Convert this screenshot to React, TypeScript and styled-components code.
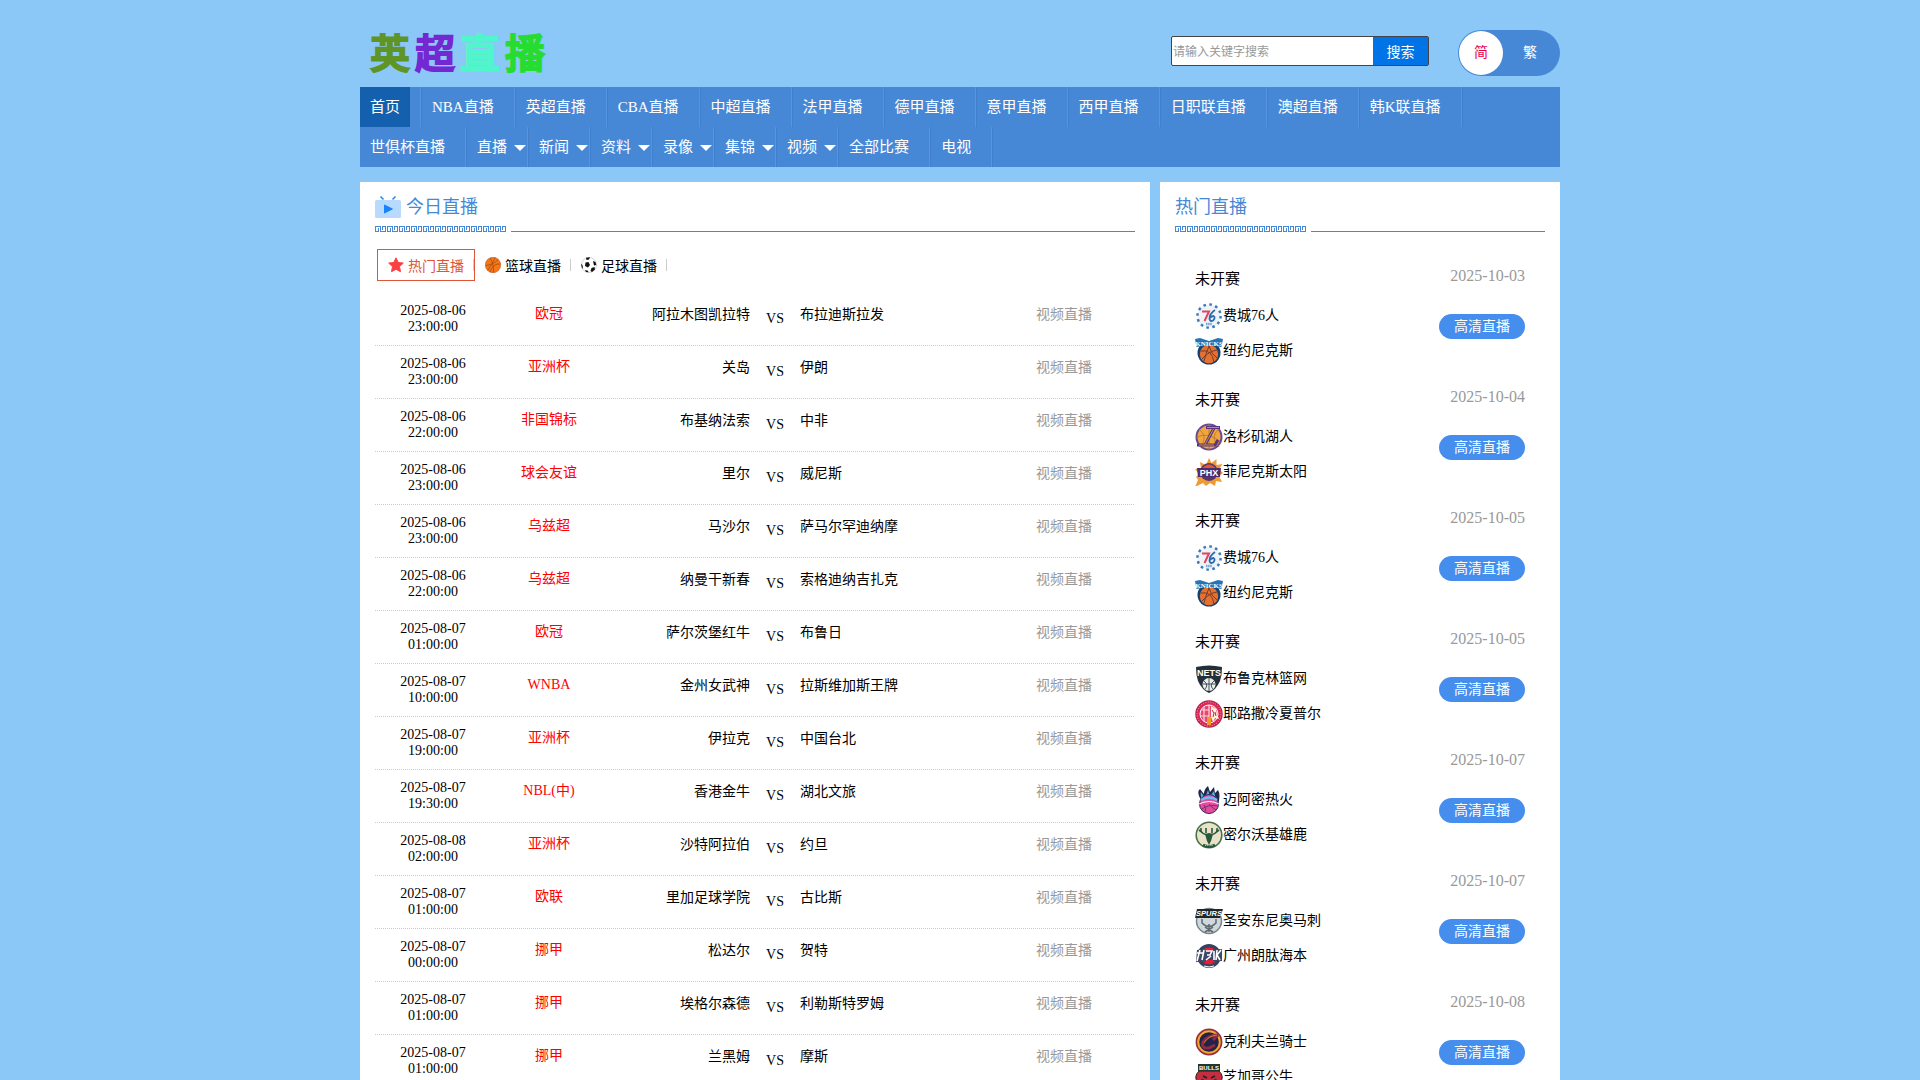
import React from "react";
import styled, { createGlobalStyle, css } from "styled-components";

const blue = "#4788d6";

const GlobalStyle = createGlobalStyle`
  * { box-sizing: border-box; }
  html, body { margin: 0; padding: 0; }
  body {
    background: #8bc8f8;
    color: #000;
    font: 14px/16px "Liberation Serif", "Noto Sans CJK SC", serif;
    overflow: hidden;
  }
  a { color: inherit; text-decoration: none; }
  ul { list-style: none; margin: 0; padding: 0; }
  h1, h2, p { margin: 0; font-weight: 400; }
  button, input { font-family: inherit; border: 0; padding: 0; margin: 0; }
  button { cursor: pointer; }
`;

const Page = styled.div`
  height: 100vh;
  overflow: hidden;
`;

const Container = styled.div`
  max-width: 1200px;
  margin: 0 auto;
`;

const Header = styled.header`
  display: flex;
  align-items: flex-start;
  padding: 30px 0 11px;
`;

const Logo = styled.h1`
  flex: 1;
  padding-left: 10px;
  font-size: 40px;
  line-height: 42px;
  font-weight: 500;
  font-family: "Noto Sans CJK SC", sans-serif;

  a { display: flex; gap: 5px; }
`;

const LogoChar = styled.span<{ $color: string }>`
  color: ${(p) => p.$color};
  -webkit-text-stroke: 2px ${(p) => p.$color};
  stroke-linejoin: round;
`;

const SearchForm = styled.form`
  display: flex;
  width: 258px;
  height: 30px;
  margin: 6px 29px 0 0;
  border: 1px solid #444;
  border-radius: 2px;
  background: #fff;
`;

const SearchInput = styled.input`
  flex: 1;
  min-width: 0;
  padding: 3px 0 0 1px;
  font-size: 12px;
  background: transparent;
  outline: none;
  &::placeholder { color: #999; }
`;

const SearchButton = styled.button`
  width: 55px;
  font-size: 14px;
  color: #fff;
  background: #0073e6;
`;

const LangSwitch = styled.div`
  display: flex;
  padding: 1px;
  width: 102px;
  height: 46px;
  border-radius: 23px;
  background: ${blue};
`;

const LangButton = styled.button<{ $active?: boolean }>`
  width: 44px;
  height: 44px;
  padding-bottom: 4px;
  border-radius: 50%;
  font-size: 14px;
  color: ${(p) => (p.$active ? "#e6004c" : "#fff")};
  background: ${(p) => (p.$active ? "#fff" : "transparent")};
  & + & { margin-left: 5px; }
`;

const Nav = styled.nav`
  background: ${blue};
  ul { display: flex; flex-wrap: wrap; }
`;

const NavItem = styled.li`
  display: flex;
  height: 40px;
  padding-right: 10px;
  border-right: 1px solid #5595e4;
  margin-right: 1px;
  box-shadow: 1px 0 #3f7fcc;
`;

const NavLink = styled.a<{ $active?: boolean; $caret?: boolean }>`
  display: flex;
  align-items: center;
  position: relative;
  padding: 0 10px;
  font-size: 15px;
  color: #fff;
  ${(p) => p.$active && css`background: #1560ae;`}
  ${(p) =>
    p.$caret &&
    css`
      &::after {
        content: "";
        position: absolute;
        right: -9px;
        top: 18px;
        border: 6px solid transparent;
        border-top-color: #fff;
        border-bottom: 0;
      }
    `}
`;

const Columns = styled.div`
  display: flex;
  align-items: flex-start;
  gap: 10px;
  margin-top: 15px;
`;

const Panel = styled.section<{ $side?: boolean }>`
  ${(p) => (p.$side ? "width: 400px;" : "flex: 1;")}
  padding: 0 15px 20px;
  background: #fff;
`;

const PanelTitle = styled.h2`
  display: flex;
  align-items: center;
  gap: 5px;
  height: 44px;
  padding-top: 5px;
  font-size: 18px;
  line-height: 24px;
  color: ${blue};
`;

const Rule = styled.div`
  display: flex;
  gap: 5px;
  height: 6px;

  svg { flex: none; display: block; }
  &::after {
    content: "";
    flex: 1;
    border-bottom: 1px solid ${blue};
  }
`;

const Tabs = styled.div`
  display: flex;
  padding: 17px 2px 12px;
`;

const Tab = styled.button<{ $active?: boolean }>`
  display: flex;
  align-items: center;
  gap: 4px;
  height: 32px;
  padding: 0 10px;
  position: relative;
  font-size: 14px;
  color: ${(p) => (p.$active ? "#df5538" : "#000")};
  background: none;
  ${(p) => p.$active && css`border: 1px solid #df5538;`}

  &::after {
    content: "";
    position: absolute;
    right: 0;
    top: ${(p) => (p.$active ? 9 : 10)}px;
    width: 1px;
    height: 12px;
    background: #ccc;
  }
`;

const Schedule = styled.table`
  width: 100%;
  table-layout: fixed;
  border-spacing: 0;
  tr {
    background: repeating-linear-gradient(90deg, #ccc 0 1px, transparent 1px 2px)
      bottom / 100% 1px no-repeat;
  }
`;

const Cell = styled.td<{ $top: number; $align?: string; $color?: string }>`
  height: 53px;
  padding: ${(p) => p.$top}px 0 0;
  vertical-align: top;
  text-align: ${(p) => p.$align || "center"};
  color: ${(p) => p.$color || "#000"};
  time { display: block; width: 80px; margin: 0 auto; }
`;

const HotList = styled.ul`
  padding: 32px 20px 0;
`;

const HotMatch = styled.li`
  display: flex;
  justify-content: space-between;
  height: 121px;
`;

const Status = styled.p`
  height: 36px;
  font-size: 15px;
  line-height: 30px;
`;

const Team = styled.div`
  display: flex;
  align-items: flex-start;
  height: 35px;
  padding-top: 2px;
  svg { flex: none; }
  span { line-height: 28px; }
`;

const HotSide = styled.div`
  display: flex;
  flex-direction: column;
  align-items: flex-end;
  padding-top: 2px;
  time { font-size: 16px; line-height: 20px; color: #999; }
`;

const HdButton = styled.a`
  width: 86px;
  margin-top: 28px;
  border-radius: 13px;
  line-height: 25px;
  text-align: center;
  color: #fff;
  background: #458eee;
`;

const TvIcon = () => (
  <svg width="26" height="22" viewBox="0 0 26 22" aria-hidden="true">
    <path d="M5.5.5 8.500 3.500M20.500.5 17.500 3.500" stroke="#1e88f7" strokeWidth="1.5" />
    <rect y="4" width="26" height="18" rx="1.5" fill="#b9daff" />
    <path d="M9 9.300q0-1 1-.6l7.500 3.700q.8.600 0 1.200L10 17.300q-1 .4-1-.6z" fill="#1684fb" />
  </svg>
);

const Meander = () => (
  <svg width="131" height="6" viewBox="0 0 131 6" fill="none" stroke={blue} shapeRendering="crispEdges" aria-hidden="true">
    {Array.from({ length: 11 }, (_, i) => (
      <path
        key={i}
        transform={`translate(${i * 12} 0)`}
        d="M3.5 2V5.5H.5V.5H5.5V5.5H10.500V.5H7.500V4"
      />
    ))}
  </svg>
);

const StarIcon = () => (
  <svg width="16" height="16" viewBox="0 0 16 16" aria-hidden="true">
    <path
      d="M8 .8l2.200 4.700 5.100.6-3.800 3.500 1 5.100L8 12.300l-4.500 2.400 1-5.100L.7 6.100l5.100-.6z"
      fill="#fd3f41" stroke="#fd3f41" strokeLinejoin="round"
    />
  </svg>
);

const BasketballIcon = () => (
  <svg width="16" height="16" viewBox="0 0 16 16" fill="none" aria-hidden="true">
    <circle cx="8" cy="8" r="7.700" fill="#f87518" stroke="#b4601f" strokeWidth=".6" />
    <path d="M.5 8.500Q8 8 13.200 2.500M5 1Q9 7 8.500 15.500M10 .6Q7 8 2.600 13.200M15.500 7Q8 6 5 15" stroke="#a1500f" strokeWidth=".8" />
  </svg>
);

const FootballIcon = () => (
  <svg width="16" height="16" viewBox="0 0 16 16" aria-hidden="true">
    <circle cx="8" cy="8" r="7.600" fill="#fff" stroke="#bbb" strokeWidth=".6" />
    <path d="M5 .8 9 .3 8 2.500 5.500 3zM4.500 5.500 7.500 5l1.500 3-2 2.500L4 9zM12 4l2.500 1 .8 3-2.300.5zM10.500 11l3-1 .5 2.500-3 2.500-1.500-1zM0 7l1.500 1 .5 4L.8 10.500zM4 13l3 .8.5 1.500L5 15z" fill="#111" />
  </svg>
);

const crests: Record<string, React.ReactNode> = {
  sixers: (
    <>
      <circle cx="14" cy="14" r="11.5" fill="#eef3fa" />
      <circle cx="14" cy="14" r="11.6" fill="none" stroke="#3877b8" strokeWidth="2.4" strokeDasharray="2.6 3.47" />
      <path d="M7 9.500H14L9.500 19" fill="none" stroke="#e2435c" strokeWidth="2" />
      <path d="M20 8Q14 12 14.500 17q.7 3 3.500 1.500 3-3 .5-4.500-2 0-3.500 2" fill="none" stroke="#2a6cb0" strokeWidth="1.8" />
      <path d="M11 22H17" stroke="#79a3cd" strokeWidth="2.4" strokeDasharray="1.5 .6" />
    </>
  ),
  knicks: (
    <>
      <circle cx="14" cy="16" r="11.5" fill="#17406f" />
      <circle cx="14" cy="17" r="9.2" fill="#e5702f" />
      <path d="M14 9Q16 17 22 21M6 14Q17 12 19 25M14 9Q11 16 9 24M22 13Q14 14 7 22" fill="none" stroke="#733d2d" />
      <path d="M0 2 5 1 14 4 23 1 28 2 26.500 10Q14 7 1.500 10z" fill="#2774b5" />
      <text x="14" y="9" fontSize="7" fontWeight="900" fill="#fff" textAnchor="middle" fontFamily="Liberation Serif">KNICKS</text>
    </>
  ),
  lakers: (
    <>
      <circle cx="14" cy="14" r="12.5" fill="#f0a63d" stroke="#6a4795" strokeWidth="2" />
      <path d="M2 14Q12 9 25 18M14 1V27M4 6Q14 14 5 24M24 6Q14 14 24 24" fill="none" stroke="#b5752d" strokeWidth=".8" />
      <path d="M11 4.500H25M19 5 10 22M2 22H20L23 17" fill="none" stroke="#5a347d" strokeWidth="3" />
      <path d="M12 4.500H24M18.500 6 10 21.500M4 22H19" fill="none" stroke="#e6a546" strokeWidth=".8" />
    </>
  ),
  suns: (
    <>
      <path d="M14 0l2.500 5 5-4v6l6-1-3.500 5 4 4-4 3 3 6-6-1-1 5-5-3-4 3-3-3-8 4 3-7-2-3 3-3-4-5 6-1-1-6 6 3z" fill="#ef9a35" />
      <circle cx="14" cy="14" r="9" fill="#55356f" />
      <path d="M6 12Q14 1 22 12z" fill="#e15a2f" />
      <path d="M2 10H26L25 19H3z" fill="#4c2c6d" />
      <text x="14" y="18" fontSize="9" fontWeight="900" fill="#fff" textAnchor="middle" fontFamily="Liberation Sans">PHX</text>
    </>
  ),
  nets: (
    <>
      <path d="M1 2Q14-1 27 2 27 10 25 16 21 25 14 28 7 25 3 16 1 10 1 2z" fill="#243039" />
      <text x="14" y="11" fontSize="9" fontWeight="900" fill="#fff" textAnchor="middle" fontFamily="Liberation Sans">NETS</text>
      <circle cx="14" cy="19.5" r="6.5" fill="#e8eded" />
      <path d="M14 13V26M9 16Q14 20 10 24M19 16Q14 20 18 24M8 19H20" fill="none" stroke="#243039" strokeWidth=".8" />
    </>
  ),
  jerusalem: (
    <>
      <circle cx="14" cy="14" r="13" fill="#dc2859" stroke="#b9234c" strokeWidth="1.5" />
      <circle cx="14" cy="14" r="12" fill="none" stroke="#f5a3b6" strokeDasharray="1 1.5" />
      <circle cx="14" cy="14" r="9" fill="#e8476f" stroke="#fff" />
      <path d="M14 5v18M6 10h8M5 16h9M9 7v14" stroke="#ffd6de" strokeWidth="1.2" />
      <path d="M16 6l5 3 1 5 2 5-4-1-2 4-2-5z" fill="#fff2d5" />
      <path d="M17 10l2 3-1 4M20 12l1 4" stroke="#b9234c" fill="none" />
      <path d="M12 17h4v8h-4z" fill="#f29a22" />
    </>
  ),
  heat: (
    <>
      <path d="M6 14Q1 6 5 3L9 8Q9 3 13 0L15 6 19 1 20 7 23 4Q26 9 23 18z" fill="#21264a" />
      <path d="M7 14Q5 8 6 6l4 6 3-8 2 6 4-5 2 9z" fill="#58aeea" />
      <circle cx="14" cy="18" r="9.5" fill="#e34b9c" stroke="#332b58" />
      <path d="M6 14Q14 9 22 14" fill="none" stroke="#67bff2" strokeWidth="2.5" />
      <path d="M14 18Q16 21 21 24M9 19Q12 23 10 26M7 23Q14 18 22 20" fill="none" stroke="#7d2e75" />
      <path d="M4 18Q14 13 24 18" fill="none" stroke="#fff" />
    </>
  ),
  bucks: (
    <>
      <circle cx="14" cy="14" r="12.8" fill="#e8e2c8" stroke="#477148" strokeWidth="1.6" />
      <path d="M10 13 14 12 18 13 16 20 14 24 12 20z" fill="#28583c" />
      <path d="M13 14Q5 13 6 7M8 12L4 9M15 14Q23 13 22 7M20 12L24 9M11 12V7M17 12V7" fill="none" stroke="#28583c" strokeWidth="1.6" />
      <path d="M8 24Q14 27 20 24" stroke="#28583c" strokeWidth="3" fill="none" />
      <path d="M10 24.500H18" stroke="#b8c4a6" strokeDasharray="1 .8" />
    </>
  ),
  spurs: (
    <>
      <circle cx="14" cy="14" r="12.5" fill="#cfd8dc" stroke="#78858b" strokeWidth="1.5" />
      <path d="M7 12V16Q14 23 21 16V12M14 17V25M10 20 18 25M18 20 10 25" fill="none" stroke="#5f6b70" strokeWidth="1.5" />
      <path d="M2 2H28L25 11H0z" fill="#20272b" />
      <text x="14" y="9" fontSize="7.5" fontWeight="900" fontStyle="italic" fill="#fff" textAnchor="middle" fontFamily="Liberation Sans">SPURS</text>
    </>
  ),
  loong: (
    <>
      <circle cx="14" cy="14" r="12" fill="#37425c" />
      <circle cx="14" cy="14" r="8.5" fill="#e31f3b" />
      <path d="M2 8 27 7 27 19 1 20z" fill="#3c4968" />
      <path d="M10 6h8v3h-8zM11 18h7v3h-7z" fill="#e31f3b" />
      <path d="M5 8 2 19M2 11H9M9 8 7 18M11 9h6l-2 4h-3M16 14l-5 4M19 9v9M22 8l-1 10M26 8l-4 5 3 5" fill="none" stroke="#fff" strokeWidth="1.6" />
      <path d="M9 24Q14 26 19 24" stroke="#fff" fill="none" />
    </>
  ),
  cavaliers: (
    <>
      <circle cx="14" cy="14" r="12.4" fill="#24224a" stroke="#9a2c3b" strokeWidth="2" />
      <circle cx="14" cy="14" r="10.8" fill="none" stroke="#efa92e" strokeWidth="2" />
      <path d="M23 7Q13 7 8 14 6 21 14 20L20 17M23 7 18 12" fill="none" stroke="#8b2d42" strokeWidth="3" />
      <path d="M22 7Q13 8 9 15" fill="none" stroke="#d9953e" strokeWidth=".8" />
    </>
  ),
  bulls: (
    <>
      <path d="M4 8Q-2 14 3 19L8 16 10 26 14 28 18 26 20 16 25 19Q30 14 24 8z" fill="#c72d40" stroke="#222" />
      <rect x="3" y="1" width="22" height="7" fill="#23352f" />
      <text x="14" y="7" fontSize="6" fontWeight="900" fill="#fff" textAnchor="middle" fontFamily="Liberation Sans">BULLS</text>
      <path d="M8 13 12 15M20 13 16 15M11 22H17" stroke="#222" strokeWidth="1.5" />
    </>
  ),
};

const Crest = ({ team }: { team: string }) => (
  <svg width="28" height="28" viewBox="0 0 28 28" aria-hidden="true">
    {crests[team]}
  </svg>
);

const navItems: { label: string; caret?: boolean }[] = [
  { label: "首页" },
  { label: "NBA直播" },
  { label: "英超直播" },
  { label: "CBA直播" },
  { label: "中超直播" },
  { label: "法甲直播" },
  { label: "德甲直播" },
  { label: "意甲直播" },
  { label: "西甲直播" },
  { label: "日职联直播" },
  { label: "澳超直播" },
  { label: "韩K联直播" },
  { label: "世俱杯直播" },
  { label: "直播", caret: true },
  { label: "新闻", caret: true },
  { label: "资料", caret: true },
  { label: "录像", caret: true },
  { label: "集锦", caret: true },
  { label: "视频", caret: true },
  { label: "全部比赛" },
  { label: "电视" },
];

const matches = [
  ["2025-08-06 23:00:00", "欧冠", "阿拉木图凯拉特", "布拉迪斯拉发"],
  ["2025-08-06 23:00:00", "亚洲杯", "关岛", "伊朗"],
  ["2025-08-06 22:00:00", "非国锦标", "布基纳法索", "中非"],
  ["2025-08-06 23:00:00", "球会友谊", "里尔", "威尼斯"],
  ["2025-08-06 23:00:00", "乌兹超", "马沙尔", "萨马尔罕迪纳摩"],
  ["2025-08-06 22:00:00", "乌兹超", "纳曼干新春", "索格迪纳吉扎克"],
  ["2025-08-07 01:00:00", "欧冠", "萨尔茨堡红牛", "布鲁日"],
  ["2025-08-07 10:00:00", "WNBA", "金州女武神", "拉斯维加斯王牌"],
  ["2025-08-07 19:00:00", "亚洲杯", "伊拉克", "中国台北"],
  ["2025-08-07 19:30:00", "NBL(中)", "香港金牛", "湖北文旅"],
  ["2025-08-08 02:00:00", "亚洲杯", "沙特阿拉伯", "约旦"],
  ["2025-08-07 01:00:00", "欧联", "里加足球学院", "古比斯"],
  ["2025-08-07 00:00:00", "挪甲", "松达尔", "贺特"],
  ["2025-08-07 01:00:00", "挪甲", "埃格尔森德", "利勒斯特罗姆"],
  ["2025-08-07 01:00:00", "挪甲", "兰黑姆", "摩斯"],
];

const hotMatches = [
  ["2025-10-03", "sixers", "费城76人", "knicks", "纽约尼克斯"],
  ["2025-10-04", "lakers", "洛杉矶湖人", "suns", "菲尼克斯太阳"],
  ["2025-10-05", "sixers", "费城76人", "knicks", "纽约尼克斯"],
  ["2025-10-05", "nets", "布鲁克林篮网", "jerusalem", "耶路撒冷夏普尔"],
  ["2025-10-07", "heat", "迈阿密热火", "bucks", "密尔沃基雄鹿"],
  ["2025-10-07", "spurs", "圣安东尼奥马刺", "loong", "广州朗肽海本"],
  ["2025-10-08", "cavaliers", "克利夫兰骑士", "bulls", "芝加哥公牛"],
];

export default function App() {
  return (
    <Page>
      <GlobalStyle />
      <Container>
        <Header>
          <Logo>
            <a href="#">
              <LogoChar $color="#5f9426">英</LogoChar>
              <LogoChar $color="#7428d2">超</LogoChar>
              <LogoChar $color="#50f5cb">直</LogoChar>
              <LogoChar $color="#27dc30">播</LogoChar>
            </a>
          </Logo>
          <SearchForm onSubmit={(e) => e.preventDefault()}>
            <SearchInput type="text" aria-label="搜索" placeholder="请输入关键字搜索" />
            <SearchButton type="submit">搜索</SearchButton>
          </SearchForm>
          <LangSwitch>
            <LangButton type="button" $active>简</LangButton>
            <LangButton type="button">繁</LangButton>
          </LangSwitch>
        </Header>
        <Nav>
          <ul>
            {navItems.map((item, i) => (
              <NavItem key={item.label}>
                <NavLink href="#" $active={i === 0} $caret={item.caret}>{item.label}</NavLink>
              </NavItem>
            ))}
          </ul>
        </Nav>
        <Columns>
          <Panel>
            <PanelTitle><TvIcon />今日直播</PanelTitle>
            <Rule><Meander /></Rule>
            <Tabs>
              <Tab type="button" $active><StarIcon />热门直播</Tab>
              <Tab type="button"><BasketballIcon />篮球直播</Tab>
              <Tab type="button"><FootballIcon />足球直播</Tab>
            </Tabs>
            <Schedule>
              <colgroup>
                <col width="116" />
                <col width="116" />
                <col width="143" />
                <col width="50" />
                <col />
                <col width="142" />
              </colgroup>
              <tbody>
                {matches.map(([time, league, home, away], i) => (
                  <tr key={i}>
                    <Cell $top={10}><time>{time}</time></Cell>
                    <Cell $top={13} $color="#f00">{league}</Cell>
                    <Cell $top={14} $align="right">{home}</Cell>
                    <Cell $top={18}>VS</Cell>
                    <Cell $top={14} $align="left">{away}</Cell>
                    <Cell $top={14} $color="#999"><a href="#">视频直播</a></Cell>
                  </tr>
                ))}
              </tbody>
            </Schedule>
          </Panel>
          <Panel $side>
            <PanelTitle>热门直播</PanelTitle>
            <Rule><Meander /></Rule>
            <HotList>
              {hotMatches.map(([date, homeLogo, home, awayLogo, away], i) => (
                <HotMatch key={i}>
                  <div>
                    <Status>未开赛</Status>
                    <Team><Crest team={homeLogo} /><span>{home}</span></Team>
                    <Team><Crest team={awayLogo} /><span>{away}</span></Team>
                  </div>
                  <HotSide>
                    <time>{date}</time>
                    <HdButton href="#">高清直播</HdButton>
                  </HotSide>
                </HotMatch>
              ))}
            </HotList>
          </Panel>
        </Columns>
      </Container>
    </Page>
  );
}
